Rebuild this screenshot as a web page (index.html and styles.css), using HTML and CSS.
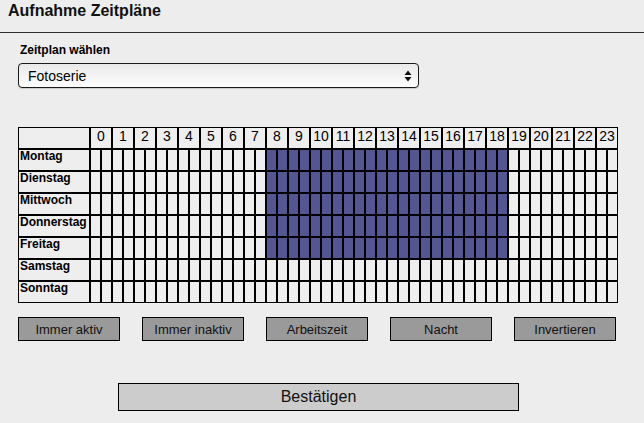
FILE: index.html
```html
<!DOCTYPE html>
<html lang="de">
<head>
<meta charset="utf-8">
<title>Aufnahme Zeitpläne</title>
<link rel="stylesheet" href="styles.css">
</head>
<body>
<div class="titlebar"><h1 class="title">Aufnahme Zeitpläne</h1></div>
<div class="content">
  <div class="label">Zeitplan wählen</div>
  <div class="selectbox">
    <span class="selecttext">Fotoserie</span>
    <svg class="arrows" width="8" height="12" viewBox="0 0 8 12"><path d="M4 0.5 L7.5 5 L0.5 5 Z M4 11.5 L7.5 7 L0.5 7 Z" fill="#111"/></svg>
  </div>
  <table class="grid">
    <tr>
      <th class="corner"></th>
      <th colspan="2">0</th><th colspan="2">1</th><th colspan="2">2</th><th colspan="2">3</th><th colspan="2">4</th><th colspan="2">5</th><th colspan="2">6</th><th colspan="2">7</th><th colspan="2">8</th><th colspan="2">9</th><th colspan="2">10</th><th colspan="2">11</th><th colspan="2">12</th><th colspan="2">13</th><th colspan="2">14</th><th colspan="2">15</th><th colspan="2">16</th><th colspan="2">17</th><th colspan="2">18</th><th colspan="2">19</th><th colspan="2">20</th><th colspan="2">21</th><th colspan="2">22</th><th colspan="2">23</th>
    </tr>
    <tr><th class="day">Montag</th><td></td><td></td><td></td><td></td><td></td><td></td><td></td><td></td><td></td><td></td><td></td><td></td><td></td><td></td><td></td><td></td><td class="on"></td><td class="on"></td><td class="on"></td><td class="on"></td><td class="on"></td><td class="on"></td><td class="on"></td><td class="on"></td><td class="on"></td><td class="on"></td><td class="on"></td><td class="on"></td><td class="on"></td><td class="on"></td><td class="on"></td><td class="on"></td><td class="on"></td><td class="on"></td><td class="on"></td><td class="on"></td><td class="on"></td><td class="on"></td><td></td><td></td><td></td><td></td><td></td><td></td><td></td><td></td><td></td><td></td></tr>
    <tr><th class="day">Dienstag</th><td></td><td></td><td></td><td></td><td></td><td></td><td></td><td></td><td></td><td></td><td></td><td></td><td></td><td></td><td></td><td></td><td class="on"></td><td class="on"></td><td class="on"></td><td class="on"></td><td class="on"></td><td class="on"></td><td class="on"></td><td class="on"></td><td class="on"></td><td class="on"></td><td class="on"></td><td class="on"></td><td class="on"></td><td class="on"></td><td class="on"></td><td class="on"></td><td class="on"></td><td class="on"></td><td class="on"></td><td class="on"></td><td class="on"></td><td class="on"></td><td></td><td></td><td></td><td></td><td></td><td></td><td></td><td></td><td></td><td></td></tr>
    <tr><th class="day">Mittwoch</th><td></td><td></td><td></td><td></td><td></td><td></td><td></td><td></td><td></td><td></td><td></td><td></td><td></td><td></td><td></td><td></td><td class="on"></td><td class="on"></td><td class="on"></td><td class="on"></td><td class="on"></td><td class="on"></td><td class="on"></td><td class="on"></td><td class="on"></td><td class="on"></td><td class="on"></td><td class="on"></td><td class="on"></td><td class="on"></td><td class="on"></td><td class="on"></td><td class="on"></td><td class="on"></td><td class="on"></td><td class="on"></td><td class="on"></td><td class="on"></td><td></td><td></td><td></td><td></td><td></td><td></td><td></td><td></td><td></td><td></td></tr>
    <tr><th class="day">Donnerstag</th><td></td><td></td><td></td><td></td><td></td><td></td><td></td><td></td><td></td><td></td><td></td><td></td><td></td><td></td><td></td><td></td><td class="on"></td><td class="on"></td><td class="on"></td><td class="on"></td><td class="on"></td><td class="on"></td><td class="on"></td><td class="on"></td><td class="on"></td><td class="on"></td><td class="on"></td><td class="on"></td><td class="on"></td><td class="on"></td><td class="on"></td><td class="on"></td><td class="on"></td><td class="on"></td><td class="on"></td><td class="on"></td><td class="on"></td><td class="on"></td><td></td><td></td><td></td><td></td><td></td><td></td><td></td><td></td><td></td><td></td></tr>
    <tr><th class="day">Freitag</th><td></td><td></td><td></td><td></td><td></td><td></td><td></td><td></td><td></td><td></td><td></td><td></td><td></td><td></td><td></td><td></td><td class="on"></td><td class="on"></td><td class="on"></td><td class="on"></td><td class="on"></td><td class="on"></td><td class="on"></td><td class="on"></td><td class="on"></td><td class="on"></td><td class="on"></td><td class="on"></td><td class="on"></td><td class="on"></td><td class="on"></td><td class="on"></td><td class="on"></td><td class="on"></td><td class="on"></td><td class="on"></td><td class="on"></td><td class="on"></td><td></td><td></td><td></td><td></td><td></td><td></td><td></td><td></td><td></td><td></td></tr>
    <tr><th class="day">Samstag</th><td></td><td></td><td></td><td></td><td></td><td></td><td></td><td></td><td></td><td></td><td></td><td></td><td></td><td></td><td></td><td></td><td></td><td></td><td></td><td></td><td></td><td></td><td></td><td></td><td></td><td></td><td></td><td></td><td></td><td></td><td></td><td></td><td></td><td></td><td></td><td></td><td></td><td></td><td></td><td></td><td></td><td></td><td></td><td></td><td></td><td></td><td></td><td></td></tr>
    <tr><th class="day">Sonntag</th><td></td><td></td><td></td><td></td><td></td><td></td><td></td><td></td><td></td><td></td><td></td><td></td><td></td><td></td><td></td><td></td><td></td><td></td><td></td><td></td><td></td><td></td><td></td><td></td><td></td><td></td><td></td><td></td><td></td><td></td><td></td><td></td><td></td><td></td><td></td><td></td><td></td><td></td><td></td><td></td><td></td><td></td><td></td><td></td><td></td><td></td><td></td><td></td></tr>
  </table>
  <div class="actions">
    <button class="btn">Immer aktiv</button>
    <button class="btn">Immer inaktiv</button>
    <button class="btn">Arbeitszeit</button>
    <button class="btn">Nacht</button>
    <button class="btn">Invertieren</button>
  </div>
  <button class="confirm">Bestätigen</button>
</div>
</body>
</html>
```
FILE: styles.css
```css
html, body {
  margin: 0;
  padding: 0;
  background: #ededed;
  font-family: "Liberation Sans", Arial, sans-serif;
  color: #000;
}
.titlebar {
  height: 32px;
  border-bottom: 1px solid #2e2e2e;
  padding: 2px 0 0 8px;
  box-sizing: border-box;
  height: 33px;
}
.title {
  margin: 0;
  font-size: 16px;
  line-height: 18px;
  font-weight: bold;
  color: #111;
}
.content {
  padding: 0 18px;
}
.label {
  margin-top: 11px;
  font-size: 12px;
  line-height: 13px;
  font-weight: bold;
  padding-left: 2px;
}
.selectbox {
  margin-top: 6px;
  width: 401px;
  height: 25px;
  box-sizing: border-box;
  border: 1px solid #1a1a1a;
  border-radius: 4px;
  background: linear-gradient(#e9e9e9, #fdfdfd);
  box-shadow: 0 1px 1px rgba(0,0,0,0.15);
  display: flex;
  align-items: center;
  justify-content: space-between;
  padding: 0 6px 0 9px;
}
.selecttext {
  font-size: 14px;
  line-height: 16px;
}
.arrows {
  display: block;
}
.grid {
  margin-top: 39px;
  border-collapse: separate;
  border-spacing: 0;
}
.grid th, .grid td {
  border: 1px solid #000;
  padding: 0;
  height: 20px;
  vertical-align: top;
  background: #eeeeee;
}
.grid td {
  width: 9px;
  min-width: 9px;
  max-width: 9px;
}
.grid th {
  font-size: 14px;
  line-height: 16px;
  font-weight: normal;
  text-align: center;
}
.grid th.corner, .grid th.day {
  width: 69px;
  min-width: 69px;
  max-width: 69px;
  text-align: left;
  padding-left: 1px;
}
.grid th.day {
  font-size: 12px;
  line-height: 13px;
  font-weight: bold;
}
.grid td.on {
  background: #545694;
}
.actions {
  margin-top: 14px;
  display: flex;
  gap: 22px;
}
.btn {
  width: 102px;
  height: 24px;
  box-sizing: border-box;
  border: 1px solid #000;
  background: #9a9a9a;
  font-family: "Liberation Sans", Arial, sans-serif;
  font-size: 13px;
  color: #111;
  padding: 0;
  border-radius: 0;
}
.confirm {
  display: block;
  margin: 42px 0 0 100px;
  width: 401px;
  height: 28px;
  box-sizing: border-box;
  border: 1px solid #000;
  background: #cccccc;
  font-family: "Liberation Sans", Arial, sans-serif;
  font-size: 16px;
  color: #111;
  padding: 0;
  border-radius: 0;
}
```
